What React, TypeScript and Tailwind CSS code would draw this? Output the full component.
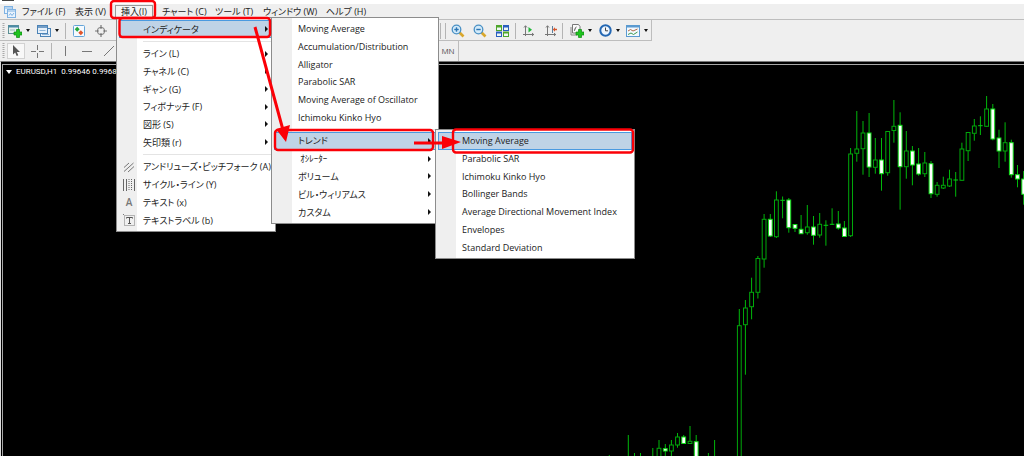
import type { ReactNode } from 'react';
import clsx from 'clsx';

type MenuEntry = {
  label: string;
  submenu?: boolean;
  active?: boolean;
  icon?: ReactNode;
};

// [x, high, body top, body bottom, low, kind]
// kind: u = hollow (up), d = filled (down), x = doji
type Candle = [number, number, number, number, number, 'u' | 'd' | 'x'];

const CANDLES: Candle[] = [
  [609.3, 455, 458, 460, 462, 'u'],
  [628.3, 435, 458, 460, 462, 'u'],
  [634.5, 453, 458, 460, 462, 'u'],
  [640.5, 453, 458, 460, 462, 'u'],
  [652.8, 448, 458, 460, 462, 'u'],
  [659, 440, 448.3, 462, 464, 'u'],
  [665.3, 444, 448.7, 451, 462, 'd'],
  [671.4, 440, 445, 451, 462, 'u'],
  [677.5, 433, 437, 445, 447.7, 'u'],
  [683.7, 435, 437, 443.5, 444, 'd'],
  [690, 426, 441.3, 443.5, 444, 'u'],
  [696.2, 435, 441.7, 462, 464, 'd'],
  [708.4, 453, 458, 460, 462, 'u'],
  [714.6, 440, 458, 460, 462, 'u'],
  [739.3, 309, 325.7, 462, 464, 'u'],
  [745.4, 300, 308, 324.7, 374.7, 'u'],
  [751.6, 277.7, 292.3, 306.7, 319.3, 'u'],
  [757.9, 256, 258.5, 292.3, 298.5, 'u'],
  [764.1, 214, 219.3, 259, 267.7, 'u'],
  [770.3, 214, 219.3, 236, 237, 'd'],
  [776.4, 191.3, 200, 236.7, 238, 'u'],
  [782.6, 196.5, 200.3, 200.3, 218.3, 'x'],
  [788.8, 198, 200, 227.7, 232.7, 'd'],
  [795, 224.3, 224.5, 228.3, 232, 'd'],
  [801.1, 215, 229.3, 233.7, 234, 'd'],
  [807.3, 205, 227, 232.7, 234.7, 'u'],
  [813.5, 216, 227, 235.3, 244.7, 'd'],
  [819.7, 213, 224.3, 235, 237.7, 'u'],
  [825.9, 220.3, 225.3, 225.3, 245.7, 'x'],
  [832.1, 208.3, 224.3, 224.3, 225, 'x'],
  [838.3, 211, 224, 228, 229.7, 'd'],
  [844.4, 221, 228, 236.5, 237, 'd'],
  [850.6, 148, 154, 235.7, 237, 'u'],
  [856.8, 111, 149, 153.3, 161.7, 'u'],
  [863, 121, 133, 148.7, 174.7, 'u'],
  [869.1, 113, 133, 167, 177, 'd'],
  [875.3, 138, 160, 167.3, 173.7, 'u'],
  [881.5, 138, 160, 173.7, 190.7, 'd'],
  [887.7, 131, 131.5, 172.7, 175.7, 'u'],
  [893.9, 100, 126.3, 130.5, 142.7, 'u'],
  [900.1, 112.3, 125.3, 166.7, 209.7, 'd'],
  [906.3, 131, 151, 166.7, 178.7, 'u'],
  [912.4, 146, 151, 165, 185.3, 'd'],
  [918.6, 148, 164, 174, 175.7, 'd'],
  [924.8, 152, 163, 173.7, 177, 'u'],
  [931, 161, 163.7, 193.7, 198, 'd'],
  [937.1, 182, 185.3, 194.3, 196.7, 'u'],
  [943.3, 176.7, 185.3, 188, 189, 'u'],
  [949.5, 169.7, 179, 186, 187, 'u'],
  [955.7, 172, 180, 180, 196.7, 'x'],
  [961.9, 142.7, 149, 180.3, 181, 'u'],
  [968.1, 132.3, 132.5, 150.7, 161, 'u'],
  [974.3, 119, 126, 133.3, 140.7, 'u'],
  [980.4, 116.3, 125.7, 125.7, 135, 'x'],
  [986.6, 96, 109, 126.3, 127, 'u'],
  [992.8, 104, 109, 139, 140.3, 'd'],
  [999, 129.7, 138, 151, 168, 'd'],
  [1005.1, 122.3, 142.7, 151, 161.7, 'u'],
  [1011.3, 139.7, 142.7, 174.7, 177.7, 'd'],
  [1017.5, 165, 174.7, 179, 187.3, 'd'],
  [1023.7, 171, 179, 194.3, 204.7, 'd'],
];

const MENU_BAR = [
  { label: 'ファイル (F)', width: 'w-[53px]' },
  { label: '表示 (V)', width: 'w-[46px]' },
  { label: '挿入(I)', width: 'w-[41px]', open: true },
  { label: 'チャート (C)', width: 'w-[53px]' },
  { label: 'ツール (T)', width: 'w-[48px]' },
  { label: 'ウィンドウ (W)', width: 'w-[63px]' },
  { label: 'ヘルプ (H)', width: 'w-[60px]' },
];

function ForkIcon() {
  return (
    <svg width="12" height="12" viewBox="0 0 12 12" fill="none" stroke="#777" strokeWidth="1">
      <path d="M1 6.500 6 2M1 10.500 10.500 2M5 11 11 5.500" />
    </svg>
  );
}

function CycleIcon() {
  return (
    <svg width="12" height="12" viewBox="0 0 12 12" fill="none" stroke="#666">
      <path d="M.5 0v12M3.500 0v12M11.500 0v12" />
      <path d="M6 0v12M8.500 0v12" strokeDasharray="1 1" />
    </svg>
  );
}

function LabelIcon() {
  return (
    <svg width="12" height="12" viewBox="0 0 12 12" fill="none" stroke="#777">
      <path d="M0 .5h2M1.500 1.500h10v10h-10z" strokeDasharray="1 1" />
      <path d="M3.500 4.500v-1h6v1M6.500 3.500v6M5 9.500h3" stroke="#555" />
    </svg>
  );
}

const DRAW_ITEMS: MenuEntry[] = [
  { label: 'ライン (L)', submenu: true },
  { label: 'チャネル (C)', submenu: true },
  { label: 'ギャン (G)', submenu: true },
  { label: 'フィボナッチ (F)', submenu: true },
  { label: '図形 (S)', submenu: true },
  { label: '矢印類 (r)', submenu: true },
];

const TEXT_ITEMS: MenuEntry[] = [
  { label: 'アンドリューズ・ピッチフォーク (A)', icon: <ForkIcon /> },
  { label: 'サイクル・ライン (Y)', icon: <CycleIcon /> },
  { label: 'テキスト (x)', icon: <span className="text-[10px] font-semibold text-[#777]">A</span> },
  { label: 'テキストラベル (b)', icon: <LabelIcon /> },
];

const RECENT_INDICATORS: MenuEntry[] = [
  { label: 'Moving Average' },
  { label: 'Accumulation/Distribution' },
  { label: 'Alligator' },
  { label: 'Parabolic SAR' },
  { label: 'Moving Average of Oscillator' },
  { label: 'Ichimoku Kinko Hyo' },
];

const INDICATOR_GROUPS: MenuEntry[] = [
  { label: 'トレンド', submenu: true, active: true },
  { label: '\u00a0ｵｼﾚｰﾀｰ', submenu: true },
  { label: 'ボリューム', submenu: true },
  { label: 'ビル・ウィリアムス', submenu: true },
  { label: 'カスタム', submenu: true },
];

const TREND_ITEMS: MenuEntry[] = [
  { label: 'Moving Average', active: true },
  { label: 'Parabolic SAR' },
  { label: 'Ichimoku Kinko Hyo' },
  { label: 'Bollinger Bands' },
  { label: 'Average Directional Movement Index' },
  { label: 'Envelopes' },
  { label: 'Standard Deviation' },
];

function MenuGroup({ items, className }: { items: MenuEntry[]; className: string }) {
  return (
    <ul className={clsx('grid auto-rows-fr', className)}>
      {items.map((item) => (
        <li key={item.label} className="flex min-h-0">
          <button
            type="button"
            role="menuitem"
            aria-haspopup={item.submenu}
            className={clsx(
              'flex w-full items-center border pr-1 text-left leading-none whitespace-nowrap',
              item.active ? 'border-[#4a9ae0] bg-[#bfd3e6]' : 'border-transparent',
            )}
          >
            <span className="flex w-[23px] shrink-0 pl-[3px]">
              <span className="flex w-3 justify-center">{item.icon}</span>
            </span>
            <span className="flex-1">{item.label}</span>
            {item.submenu && (
              <svg width="3" height="6" viewBox="0 0 3 6">
                <path d="M0 0 3 3 0 6z" fill="#111" />
              </svg>
            )}
          </button>
        </li>
      ))}
    </ul>
  );
}

function MenuPanel({ className, children }: { className: string; children: ReactNode }) {
  return (
    <div
      role="menu"
      className={clsx(
        'absolute border border-[#8c8c8c] bg-[linear-gradient(to_right,#efefef_20px,#fff_20px)] p-[2px]',
        className,
      )}
    >
      {children}
    </div>
  );
}

function MenuSeparator({ className }: { className: string }) {
  return (
    <div className={clsx('pl-6', className)}>
      <div className="border-t border-[#e4e4e4]" />
    </div>
  );
}

function ToolButton({ label, className, children }: { label: string; className: string; children: ReactNode }) {
  return (
    <button type="button" aria-label={label} className={clsx('flex h-4 shrink-0 items-center justify-center', className)}>
      {children}
    </button>
  );
}

function Divider({ className }: { className: string }) {
  return <span className={clsx('h-4 w-px shrink-0 bg-[#b4b4b4]', className)} />;
}

function Grip() {
  return (
    <svg width="3" height="16" viewBox="0 0 3 16" className="ml-[2px] shrink-0">
      <path d="M1.500 0v16" stroke="#aaa" strokeWidth="2" strokeDasharray="1 1" />
    </svg>
  );
}

function Caret() {
  return (
    <svg width="4" height="3" viewBox="0 0 4 3" className="ml-1">
      <path d="M0 0h4L2 3z" fill="#111" />
    </svg>
  );
}

function PlusBadge() {
  return <path d="M8.500 5.500h3v2.500h2.500v3h-2.500v2.500h-3v-2.500h-2.500v-3h2.500z" fill="#1fc41f" stroke="#0b8a12" strokeWidth=".7" />;
}

function NewChartIcon() {
  return (
    <svg width="14" height="14" viewBox="0 0 14 14">
      <rect x=".5" y="1.500" width="10" height="8" fill="#e8f2f0" stroke="#5d8f94" />
      <path d="M.5 2.500h10" stroke="#4b8aa8" strokeWidth="2" />
      <path d="M2 6h5" stroke="#9ab7b8" />
      <PlusBadge />
    </svg>
  );
}

function WindowsIcon() {
  return (
    <svg width="14" height="14" viewBox="0 0 14 14" fill="#e6f0fa" stroke="#4c83b6">
      <rect x="3.500" y="4.500" width="10" height="8" />
      <rect x=".5" y="1.500" width="10" height="8" />
      <path d="M.5 3h10" strokeWidth="1.500" />
      <path d="M2.500 6.500h6M5 10.500h7" stroke="#8db4d8" />
    </svg>
  );
}

function MarketIcon() {
  return (
    <svg width="12" height="12" viewBox="0 0 12 12">
      <rect x=".5" y=".5" width="11" height="11" rx="1" fill="#f5faff" stroke="#64a4d8" />
      <path d="M4.200 1.700 6.700 4.200 4.200 6.700 1.700 4.200z" fill="#25a83a" />
      <path d="M7.800 5.300 10.300 7.800 7.800 10.300 5.300 7.800z" fill="#e0552c" />
    </svg>
  );
}

function TargetIcon() {
  return (
    <svg width="12" height="12" viewBox="0 0 12 12" fill="none" stroke="#777">
      <circle cx="6" cy="6" r="3.700" />
      <path d="M6 0v4M6 8v4M0 6h4M8 6h4" strokeWidth="1.200" />
    </svg>
  );
}

function ZoomIcon({ plus = false }: { plus?: boolean }) {
  return (
    <svg width="14" height="14" viewBox="0 0 14 14" fill="none">
      <path d="M8.500 8.500 12.500 12.500" stroke="#d9a72c" strokeWidth="2.600" />
      <circle cx="5.500" cy="5.500" r="4.300" fill="#d3ebfa" stroke="#4a90c4" strokeWidth="1.300" />
      <path d="M3.300 5.500h4.400" stroke="#2c76b4" strokeWidth="1.400" />
      {plus && <path d="M5.500 3.300v4.400" stroke="#2c76b4" strokeWidth="1.400" />}
    </svg>
  );
}

function TileIcon() {
  return (
    <svg width="13" height="12" viewBox="0 0 13 12">
      <path d="M0 0h6v6H0zM7 6.500h6V12H7z" fill="#4ea62b" />
      <path d="M7 0h6v6H7zM0 6.500h6V12H0z" fill="#2a5fc0" />
      <path d="M1 2.500h4V5H1zM8 2.500h4V5H8zM1 8.500h4V11H1zM8 8.500h4V11H8z" fill="#eef6f2" />
    </svg>
  );
}

function AxisIcon({ shift = false }: { shift?: boolean }) {
  return (
    <svg width="12" height="12" viewBox="0 0 12 12" fill="none">
      <path d="M2.500 1v10M0 9.500h11M1 2.500 2.500 .7 4 2.500M9 8l1.700 1.500L9 11" stroke="#777" />
      {shift ? (
        <>
          <path d="M7.500 1v7" stroke="#5d7f9c" />
          <path d="M12 4.500H9.500" stroke="#d6542a" strokeWidth="1.500" />
          <path d="M7.800 4.500 10 2.300v4.400z" fill="#d6542a" />
        </>
      ) : (
        <path d="M5.500 2 9 4.700 5.500 7.500z" fill="#22b83a" />
      )}
    </svg>
  );
}

function IndicatorIcon() {
  return (
    <svg width="14" height="14" viewBox="0 0 14 14">
      <path d="M2.500 .5h6l1.500 2V9H2.500z" fill="#fafafa" stroke="#777" />
      <path d="M1 3v8h6" fill="none" stroke="#888" />
      <path d="M4 7c1 0 .8-4 2.500-4" fill="none" stroke="#555" />
      <PlusBadge />
    </svg>
  );
}

function ClockIcon() {
  return (
    <svg width="13" height="13" viewBox="0 0 13 13" fill="none">
      <circle cx="6.500" cy="6.500" r="5.200" fill="#eef6ff" stroke="#2468b4" strokeWidth="2" />
      <path d="M6.500 3.500v3.300h2.500" stroke="#444" />
    </svg>
  );
}

function TemplateIcon() {
  return (
    <svg width="14" height="12" viewBox="0 0 14 12" fill="none">
      <rect x=".5" y=".5" width="13" height="11" fill="#f3f9ff" stroke="#5b9ad0" />
      <path d="M1 1.500h12" stroke="#5b9ad0" strokeWidth="2" />
      <path d="m2 6 2.500-1.500L7 6l4.500-2" stroke="#b06a48" />
      <path d="m2 9.500 3-1.500 2.500 1.500L11.500 7" stroke="#3d9a50" />
    </svg>
  );
}

function AppIcon() {
  return (
    <svg width="12" height="12" viewBox="0 0 12 12" fill="#e9f3fd" stroke="#7fb2e2">
      <rect x=".5" y=".5" width="8" height="7" />
      <rect x="3.500" y="3.500" width="8" height="8" />
      <path d="M1 2h7M4 5h7" />
      <path d="m5 9.500 1.500-2 1.500 2 2-2.500" fill="none" />
    </svg>
  );
}

function MenuBar() {
  return (
    <nav className="flex h-4 items-center border-b border-[#bdbdbd] bg-[#efefef] pl-1">
      <AppIcon />
      <div className="ml-[6px] flex">
        {MENU_BAR.map((m) => (
          <button
            key={m.label}
            type="button"
            aria-expanded={m.open}
            className={clsx('flex h-[15px] shrink-0 items-center leading-none whitespace-nowrap', m.width)}
          >
            <span className={clsx(m.open && '-ml-[6px] border-x border-t border-[#999] bg-[#f4f4f4] px-[5px] pt-px pb-[3px]')}>
              {m.label}
            </span>
          </button>
        ))}
      </div>
    </nav>
  );
}

function StandardToolbar() {
  return (
    <div role="toolbar" aria-label="Standard" className="flex h-[21px] w-fit items-center border-r border-b border-[#bdbdbd] pt-px">
      <Grip />
      <ToolButton label="New chart" className="ml-[3px] w-[22px]"><NewChartIcon /><Caret /></ToolButton>
      <ToolButton label="Profiles" className="ml-[7px] w-[22px]"><WindowsIcon /><Caret /></ToolButton>
      <Divider className="ml-[6px]" />
      <ToolButton label="Market watch" className="ml-[6px] w-[14px]"><MarketIcon /></ToolButton>
      <ToolButton label="Data window" className="ml-2 w-[14px]"><TargetIcon /></ToolButton>
      <Divider className="ml-[332px]" />
      <Divider className="ml-1" />
      <ToolButton label="Zoom in" className="ml-[5px] w-[14px]"><ZoomIcon plus /></ToolButton>
      <ToolButton label="Zoom out" className="ml-2 w-[14px]"><ZoomIcon /></ToolButton>
      <ToolButton label="Tile windows" className="ml-2 w-[14px]"><TileIcon /></ToolButton>
      <Divider className="ml-[6px]" />
      <ToolButton label="Auto scroll" className="ml-[6px] w-[14px]"><AxisIcon /></ToolButton>
      <ToolButton label="Chart shift" className="ml-2 w-[14px]"><AxisIcon shift /></ToolButton>
      <Divider className="ml-1" />
      <ToolButton label="Indicators" className="ml-[7px] w-[22px]"><IndicatorIcon /><Caret /></ToolButton>
      <ToolButton label="Periods" className="ml-[6px] w-[22px]"><ClockIcon /><Caret /></ToolButton>
      <ToolButton label="Templates" className="mr-[3px] ml-[6px] w-[22px]"><TemplateIcon /><Caret /></ToolButton>
    </div>
  );
}

function LineToolbar() {
  return (
    <div role="toolbar" aria-label="Line studies" className="flex h-5 w-fit items-center border-r border-[#bdbdbd]">
      <Grip />
      <ToolButton label="Cursor" className="ml-[2px] w-[18px] border border-[#d2d2d2] bg-[#f8f8f8]">
        <svg width="8" height="12" viewBox="0 0 8 12">
          <path d="M1 0v9.500l2.200-2L4.700 11l1.600-.8-1.500-3.200H8z" fill="#555" />
        </svg>
      </ToolButton>
      <ToolButton label="Crosshair" className="ml-[5px] w-[14px]">
        <svg width="13" height="13" viewBox="0 0 13 13" stroke="#777">
          <path d="M6.500 0v5M6.500 8v5M0 6.500h5M8 6.500h5" />
        </svg>
      </ToolButton>
      <Divider className="ml-[7px]" />
      <ToolButton label="Vertical line" className="ml-[6px] w-[14px]">
        <svg width="3" height="10" viewBox="0 0 3 10" stroke="#777">
          <path d="M1.500 0v10" />
        </svg>
      </ToolButton>
      <ToolButton label="Horizontal line" className="ml-2 w-[14px]">
        <svg width="10" height="3" viewBox="0 0 10 3" stroke="#777">
          <path d="M0 1.500h10" />
        </svg>
      </ToolButton>
      <ToolButton label="Trend line" className="ml-2 w-[14px]">
        <svg width="10" height="10" viewBox="0 0 10 10" stroke="#777">
          <path d="M0 10 10 0" />
        </svg>
      </ToolButton>
      <button type="button" className="ml-[322px] w-5 text-[8px] leading-none text-[#555]">MN</button>
    </div>
  );
}

function PriceChart() {
  return (
    <svg viewBox="3 65 1021 391" className="block w-full" role="img" aria-label="EURUSD,H1">
      {CANDLES.map(([x, high, top, bottom, low, kind]) => (
        <g key={x} stroke="#00b80a" strokeWidth="1">
          <path d={`M${x} ${high}V${top}M${x} ${bottom}V${low}`} />
          {kind === 'x' ? (
            <path d={`M${x - 2.3} ${top}h4.600`} stroke="#00d010" />
          ) : (
            <rect
              x={x - 1.9}
              y={top}
              width="3.800"
              height={bottom - top}
              fill={kind === 'd' ? '#ffffff' : '#000000'}
              stroke={kind === 'd' ? '#10dc18' : '#00a80a'}
            />
          )}
        </g>
      ))}
    </svg>
  );
}

// red boxes and arrows that lead the reader through the menus
function Callouts() {
  return (
    <svg width="640" height="160" viewBox="0 0 640 160" className="pointer-events-none absolute top-0 left-0">
      <g fill="none" stroke="#fb0007" strokeWidth="2.400">
        <rect x="111" y="1" width="44" height="17" rx="3" />
        <rect x="119.500" y="18" width="150.500" height="19" rx="3" />
        <rect x="275" y="130" width="158" height="20" rx="3" />
        <rect x="453" y="129.500" width="180" height="23" rx="3" />
        <path d="M255 27 283 130M414 143H446" strokeWidth="3" />
      </g>
      <path d="M286 142 276 129 290 125zM461 142 442 136V149z" fill="#fb0007" />
    </svg>
  );
}

export default function App() {
  return (
    <div className="relative flex min-h-screen flex-col overflow-hidden bg-[#efefef] font-['Open_Sans','Noto_Sans_CJK_JP',sans-serif] text-[9px] text-[#222] [font-feature-settings:'palt']">
      <header>
        <div className="h-1 bg-white pl-[2px]">
          <div className="h-px w-3 bg-[#444]" />
        </div>
        <MenuBar />
        <StandardToolbar />
        <LineToolbar />
      </header>

      <main className="relative flex-1 border-t border-l border-t-[#777] border-l-[#ddd] bg-black pt-[2px] pl-px">
        <div className="border-t border-l border-[#a8a8a8]">
          <div className="absolute top-1 left-1 flex items-center gap-1 pl-px font-['Roboto',sans-serif] text-[8px] leading-[11px] whitespace-nowrap text-white">
            <svg width="6" height="4" viewBox="0 0 6 4">
              <path d="M0 0h6L3 4z" fill="#fff" />
            </svg>
            <span>EURUSD,H1&nbsp; 0.99646 0.99685</span>
          </div>
          <PriceChart />
        </div>
      </main>

      <MenuPanel className="top-[17px] left-[116px] w-[160px]">
        <MenuGroup items={[{ label: 'インディケータ', submenu: true, active: true }]} className="h-[18px]" />
        <MenuSeparator className="h-[7px] pt-[3px]" />
        <MenuGroup items={DRAW_ITEMS} className="h-[106px]" />
        <MenuSeparator className="h-[7px] pt-[3px]" />
        <MenuGroup items={TEXT_ITEMS} className="h-[71px]" />
      </MenuPanel>

      <MenuPanel className="top-[17px] left-[271px] w-[168px]">
        <MenuGroup items={RECENT_INDICATORS} className="h-[106px]" />
        <MenuSeparator className="h-[6px] pt-[3px]" />
        <MenuGroup items={INDICATOR_GROUPS} className="h-[89px]" />
      </MenuPanel>

      <MenuPanel className="top-[129px] left-[435px] w-[200px]">
        <MenuGroup items={TREND_ITEMS} className="h-[124px]" />
      </MenuPanel>

      <Callouts />
    </div>
  );
}
